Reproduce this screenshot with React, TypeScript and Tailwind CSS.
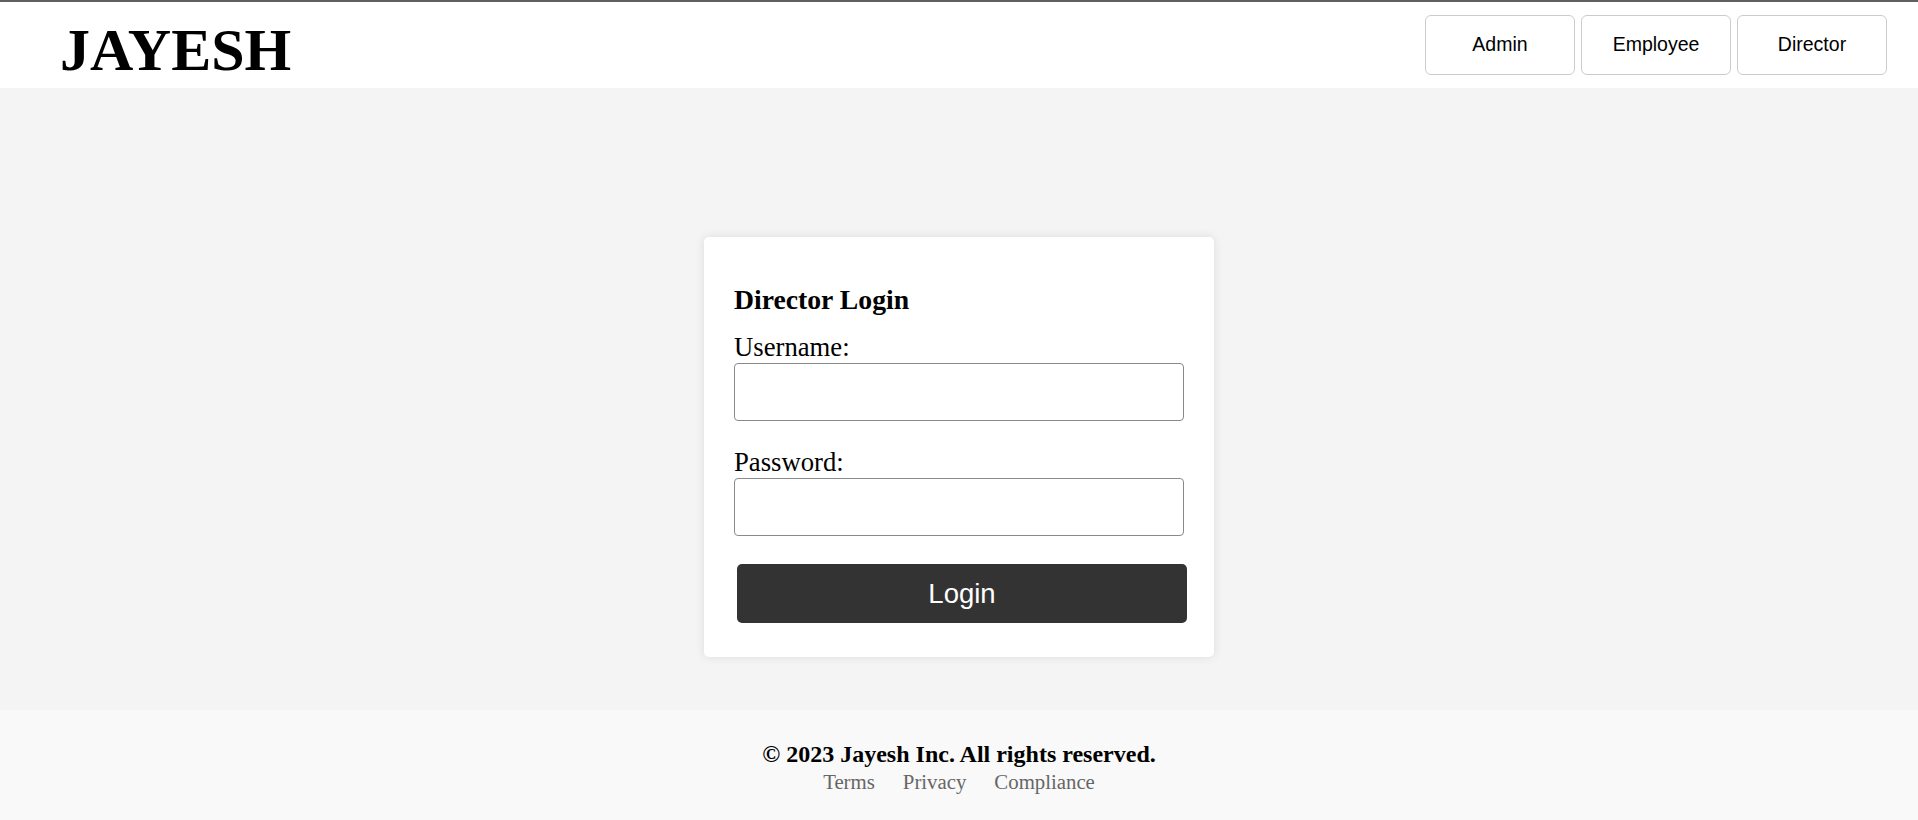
import React from "react";

const serif = "font-['Liberation_Serif','Times_New_Roman',serif]";
const sans = "font-['Liberation_Sans',Arial,sans-serif]";

function NavButton({ label }: { label: string }) {
  return (
    <button
      className={`${sans} w-[150px] h-[60px] rounded-[6px] border border-[#cccccc] bg-white text-[19.5px] text-black`}
    >
      {label}
    </button>
  );
}

export default function App() {
  return (
    <div className={`${serif} w-full min-h-[820px] flex flex-col bg-[#f4f4f4] text-black`}>
      <header className="border-t-2 border-[#606060] bg-white h-[88px] flex items-center justify-between pl-[60px] pr-[31px]">
        <h1 className={`${serif} font-bold text-[60px] leading-[60px] mt-[10px]`}>JAYESH</h1>
        <nav className="flex gap-[6px]">
          <NavButton label="Admin" />
          <NavButton label="Employee" />
          <NavButton label="Director" />
        </nav>
      </header>

      <main className="flex justify-center pt-[149px] pb-[53px] bg-[#f4f4f4]">
        <div className="w-[510px] bg-white rounded-[5px] shadow-[0_0_10px_rgba(0,0,0,0.1)] px-[30px] pt-[48px] pb-[34px]">
          <h2 className="font-bold text-[27.7px] leading-[30px]">Director Login</h2>
          <label className="block mt-[18px] text-[26.7px] leading-[29px]">Username:</label>
          <input
            type="text"
            className="block mt-[1px] w-full h-[58px] border border-[#8a8a8a] rounded-[4px] bg-white"
          />
          <label className="block mt-[27px] text-[26.7px] leading-[29px]">Password:</label>
          <input
            type="password"
            className="block mt-[1px] w-full h-[58px] border border-[#8a8a8a] rounded-[4px] bg-white"
          />
          <button
            className={`${sans} block mt-[28px] ml-[3px] w-full h-[59px] rounded-[5px] bg-[#333333] text-white text-[27.5px]`}
          >
            Login
          </button>
        </div>
      </main>

      <footer className="bg-[#f9f9f9] pt-[30px] pb-[26px] flex flex-col items-center">
        <p className="font-bold text-[24px] leading-[28px]">© 2023 Jayesh Inc. All rights reserved.</p>
        <div className="mt-[2px] flex gap-[28px] text-[20.8px] leading-[24px] text-[#666666]">
          <a>Terms</a>
          <a>Privacy</a>
          <a>Compliance</a>
        </div>
      </footer>
    </div>
  );
}
